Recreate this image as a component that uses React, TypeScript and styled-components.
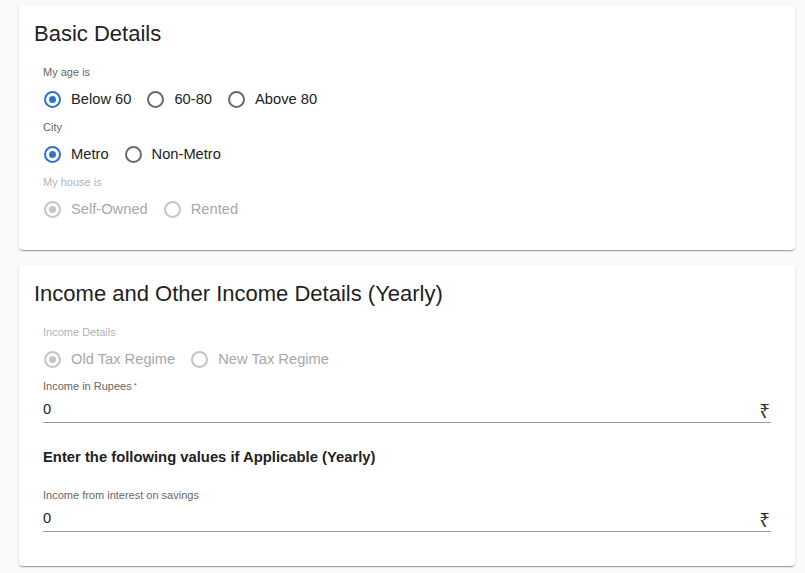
import React from 'react'
import styled, { createGlobalStyle } from 'styled-components'

const Global = createGlobalStyle`
  * { box-sizing: border-box; }
  body {
    margin: 0;
    background: #fafafa;
    font-family: 'Liberation Sans', Arial, sans-serif;
    color: #222;
  }
`

const Page = styled.div`
  padding: 5px 10px 8px 19px;
  display: flex;
  flex-direction: column;
  gap: 15px;
`

const Card = styled.section<{ $bottom: number }>`
  background: #fff;
  border-radius: 4px;
  padding: 17px 24px ${p => p.$bottom}px 24px;
  box-shadow: 0 2px 1px -1px rgba(0,0,0,.2), 0 1px 1px 0 rgba(0,0,0,.14), 0 1px 3px 0 rgba(0,0,0,.12);
`

const Title = styled.h2`
  margin: 0 0 19px -9px;
  font-size: 22px;
  line-height: 24px;
  font-weight: 400;
  color: #222;
`

const Group = styled.div`
  display: flex;
  flex-direction: column;
  & + & { margin-top: 6px; }
`

const Label = styled.div<{ $disabled?: boolean }>`
  font-size: 11px;
  line-height: 14px;
  margin-bottom: 5px;
  color: ${p => (p.$disabled ? '#b3b3b3' : '#666')};
`

const Row = styled.div`
  display: flex;
  align-items: center;
  height: 30px;
  gap: 15px;
`

const Option = styled.label<{ $disabled?: boolean }>`
  display: flex;
  align-items: center;
  gap: 10px;
  font-size: 14.7px;
  color: ${p => (p.$disabled ? '#a8a8a8' : '#222')};
`

const Circle = styled.span<{ $checked?: boolean; $disabled?: boolean }>`
  width: 17px;
  height: 17px;
  margin-left: 1px;
  border-radius: 50%;
  border: 2px solid ${p => (p.$disabled ? '#c4c4c4' : p.$checked ? '#2f72d0' : '#6b6b6b')};
  display: flex;
  align-items: center;
  justify-content: center;
  &::after {
    content: '';
    width: 7px;
    height: 7px;
    border-radius: 50%;
    background: ${p => (p.$disabled ? '#c4c4c4' : '#2f72d0')};
    display: ${p => (p.$checked ? 'block' : 'none')};
  }
`

const Field = styled.div`
  display: flex;
  flex-direction: column;
  margin-top: 5px;
`

const Asterisk = styled.span`
  font-size: 8px;
  vertical-align: top;
  margin-left: 2px;
`

const InputLine = styled.div`
  display: flex;
  align-items: center;
  justify-content: space-between;
  height: 30px;
  padding: 6px 1px 4px 0;
  border-bottom: 1px solid #9a9a9a;
  font-size: 14.7px;
  color: #222;
`

const Rupee = styled.span`
  font-family: 'Noto Sans', 'DejaVu Sans', sans-serif;
  font-size: 19px;
  line-height: 18px;
  color: #333;
  margin-top: 4px;
`

const SubHead = styled.h3`
  margin: 25px 0 22px;
  font-size: 14.8px;
  line-height: 18px;
  font-weight: 700;
  color: #222;
`

type Opt = { label: string; checked?: boolean }

function RadioGroup({ label, options, disabled }: { label: string; options: Opt[]; disabled?: boolean }) {
  return (
    <Group>
      <Label $disabled={disabled}>{label}</Label>
      <Row>
        {options.map(o => (
          <Option key={o.label} $disabled={disabled}>
            <Circle $checked={o.checked} $disabled={disabled} />
            {o.label}
          </Option>
        ))}
      </Row>
    </Group>
  )
}

function MoneyField({ label, required }: { label: string; required?: boolean }) {
  return (
    <Field>
      <Label style={{ marginBottom: 0 }}>
        {label}
        {required && <Asterisk>*</Asterisk>}
      </Label>
      <InputLine>
        <span>0</span>
        <Rupee>₹</Rupee>
      </InputLine>
    </Field>
  )
}

export default function App() {
  return (
    <Page>
      <Global />
      <Card $bottom={26}>
        <Title>Basic Details</Title>
        <RadioGroup
          label="My age is"
          options={[{ label: 'Below 60', checked: true }, { label: '60-80' }, { label: 'Above 80' }]}
        />
        <RadioGroup label="City" options={[{ label: 'Metro', checked: true }, { label: 'Non-Metro' }]} />
        <RadioGroup
          label="My house is"
          disabled
          options={[{ label: 'Self-Owned', checked: true }, { label: 'Rented' }]}
        />
      </Card>
      <Card $bottom={34}>
        <Title>Income and Other Income Details (Yearly)</Title>
        <RadioGroup
          label="Income Details"
          disabled
          options={[{ label: 'Old Tax Regime', checked: true }, { label: 'New Tax Regime' }]}
        />
        <MoneyField label="Income in Rupees" required />
        <SubHead>Enter the following values if Applicable (Yearly)</SubHead>
        <MoneyField label="Income from interest on savings" />
      </Card>
    </Page>
  )
}
